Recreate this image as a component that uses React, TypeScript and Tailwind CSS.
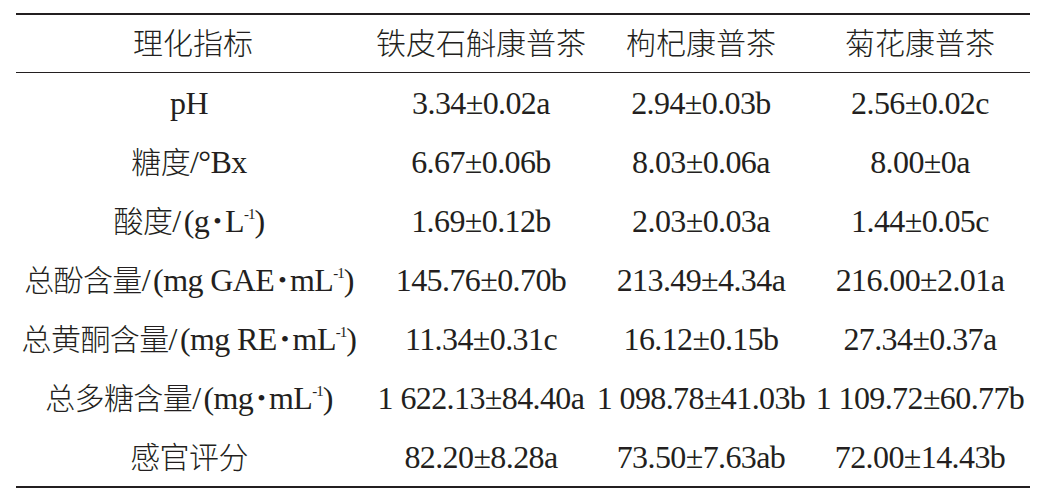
const serif = "font-['Liberation_Serif','Noto_Sans_CJK_SC',serif]";

// Chinese glyphs are a touch smaller and lighter than the Latin ones in the reference
const C = ({ children }: { children: React.ReactNode }) => (
  <span className="text-[30px] font-light">{children}</span>
);

const Open = () => <span className="ml-[3px]">(</span>;

const Unit = ({ pre }: { pre: string }) => (
  <>
    <span className="mx-[4px] text-[24px] relative top-[-3px]">•</span>
    {pre}L<sup className="text-[15px] top-[-0.85em] tracking-[-1px]">-1</sup>)
  </>
);

const header = ['理化指标', '铁皮石斛康普茶', '枸杞康普茶', '菊花康普茶'];

const rows: { label: React.ReactNode; values: string[] }[] = [
  { label: 'pH', values: ['3.34±0.02a', '2.94±0.03b', '2.56±0.02c'] },
  {
    label: (
      <>
        <C>糖度</C>/°Bx
      </>
    ),
    values: ['6.67±0.06b', '8.03±0.06a', '8.00±0a'],
  },
  {
    label: (
      <>
        <C>酸度</C>/<Open />g<Unit pre="" />
      </>
    ),
    values: ['1.69±0.12b', '2.03±0.03a', '1.44±0.05c'],
  },
  {
    label: (
      <>
        <C>总酚含量</C>/<Open />mg GAE<Unit pre="m" />
      </>
    ),
    values: ['145.76±0.70b', '213.49±4.34a', '216.00±2.01a'],
  },
  {
    label: (
      <>
        <C>总黄酮含量</C>/<Open />mg RE<Unit pre="m" />
      </>
    ),
    values: ['11.34±0.31c', '16.12±0.15b', '27.34±0.37a'],
  },
  {
    label: (
      <>
        <C>总多糖含量</C>/<Open />mg<Unit pre="m" />
      </>
    ),
    values: ['1 622.13±84.40a', '1 098.78±41.03b', '1 109.72±60.77b'],
  },
  {
    label: <C>感官评分</C>,
    values: ['82.20±8.28a', '73.50±7.63ab', '72.00±14.43b'],
  },
];

const widths = ['w-[354px]', 'w-[222px]', 'w-[218px]', 'w-[220px]'];

export default function App() {
  return (
    <div className={`w-[1048px] h-[502px] bg-white pt-[13px] pl-[16px] text-[#231f20] ${serif}`}>
      <div className="w-[1014px] border-y-2 border-[#231f20]">
        <div className="flex h-[58px] items-center border-b border-[#231f20] leading-none">
          {header.map((h, i) => (
            <div key={h} className={`${widths[i]} text-center whitespace-nowrap`}>
              <C>{h}</C>
            </div>
          ))}
        </div>
        {rows.map((r, ri) => (
          <div key={ri} className="flex h-[59px] items-center text-[32px] leading-none tracking-[-0.6px]">
            <div className={`${widths[0]} pr-[8px] text-center whitespace-nowrap`}>{r.label}</div>
            {r.values.map((v, i) => (
              <div key={i} className={`${widths[i + 1]} text-center whitespace-nowrap`}>
                {v}
              </div>
            ))}
          </div>
        ))}
      </div>
    </div>
  );
}
